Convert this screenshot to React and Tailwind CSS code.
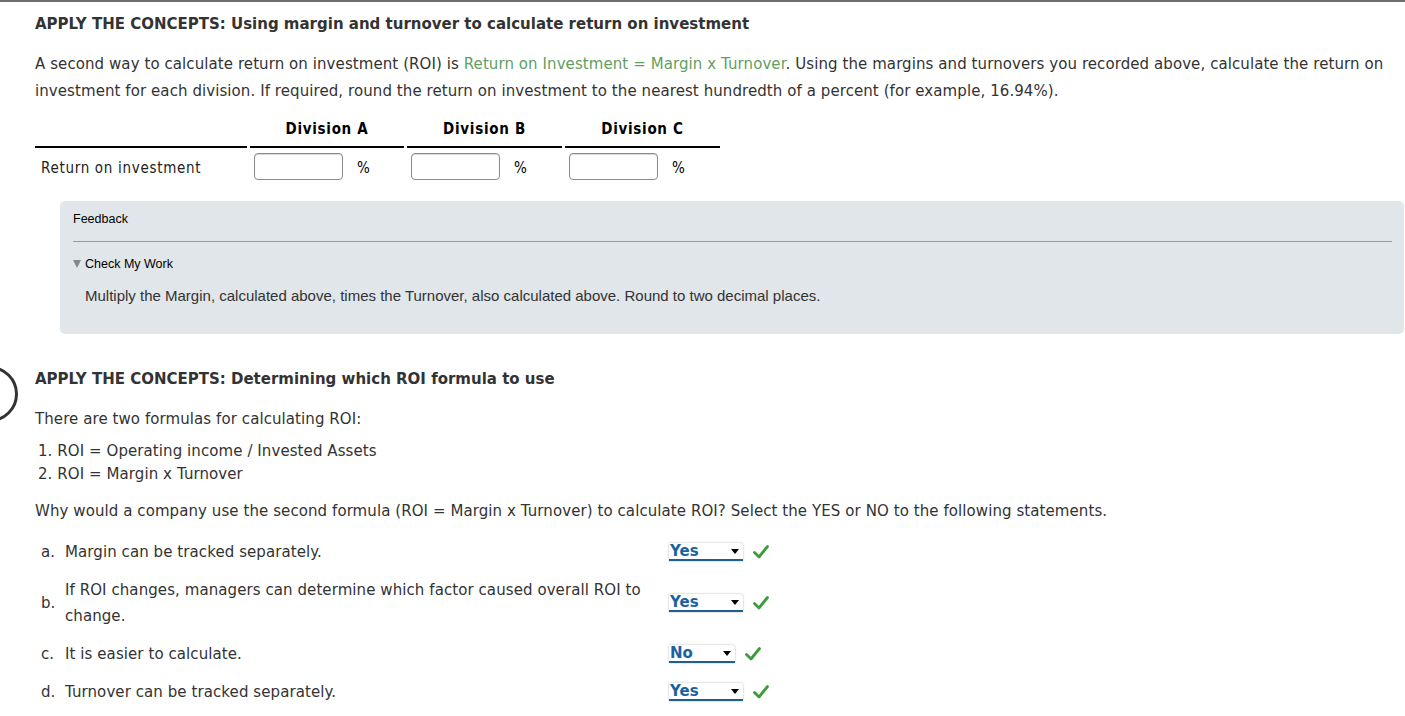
import React from "react";

const V = "font-['Verdana','DejaVu_Sans',sans-serif]";
const T = "font-['Tahoma','DejaVu_Sans_Condensed','DejaVu_Sans',sans-serif]";
const A = "font-['Arial','Liberation_Sans',sans-serif]";

function Select({ value, w }) {
  return (
    <div
      className={`relative h-[18px] bg-white border-b-2 border-[#1f5f8c] shadow-[0_0_2px_rgba(0,0,0,0.35)] rounded-tr-[3px] flex items-center ${w}`}
    >
      <span className={`${V} text-[15px] font-bold text-[#1a62a0] leading-[16px] pl-[1px] tracking-normal`}>{value}</span>
      <span className="absolute right-[4px] top-[6px] w-0 h-0 border-l-[4px] border-r-[4px] border-t-[5px] border-l-transparent border-r-transparent border-t-black" />
    </div>
  );
}

function Check() {
  return (
    <svg width="16" height="16" viewBox="0 0 16 16" className="shrink-0">
      <path d="M1.5 8.5 L6 13 L14.5 2.5" fill="none" stroke="#3c9b3c" strokeWidth="2.8" strokeLinecap="round" strokeLinejoin="round" />
    </svg>
  );
}

function Row({ letter, children, value, selW }) {
  return (
    <div className="flex items-center">
      <div className="w-[30px] pl-[6px] shrink-0">{letter}</div>
      <div className="w-[604px] shrink-0 leading-[26px]">{children}</div>
      <div className="flex items-center gap-[10px]">
        <Select value={value} w={selW} />
        <Check />
      </div>
    </div>
  );
}

export default function App() {
  return (
    <div className={`${V} text-[15px] text-[#333] bg-white min-h-[716px] border-t-2 border-[#6f6f6f] relative overflow-hidden`}>
      <div className="pl-[35px] pr-[1px]">
        <h1 className="font-bold leading-[27px] pt-[9px]">
          APPLY THE CONCEPTS: Using margin and turnover to calculate return on investment
        </h1>
        <p className="leading-[27px] mt-[13px] tracking-[0.08px]">
          A second way to calculate return on investment (ROI) is{" "}
          <span className="text-[#5f9f5f]">Return on Investment = Margin x Turnover</span>. Using the margins and
          turnovers you recorded above, calculate the return on investment for each division. If required, round the
          return on investment to the nearest hundredth of a percent (for example, 16.94%).
        </p>

        {/* table */}
        <div className={`${T} text-[15px] text-black mt-[14px] tracking-[0.7px]`}>
          <div className="flex gap-[3px]">
            <div className="w-[212px] border-b-2 border-black" />
            {["Division A", "Division B", "Division C"].map((d, i) => (
              <div
                key={d}
                className={`${i === 0 ? "w-[154px]" : "w-[155px]"} border-b-2 border-black text-center font-bold leading-[20px] pb-[7px]`}
              >
                {d}
              </div>
            ))}
          </div>
          <div className="flex gap-[3px] pt-[5px] items-center">
            <div className="w-[212px] pl-[6px] pt-[3px] text-[#222]">Return on investment</div>
            {[0, 1, 2].map((i) => (
              <div key={i} className={`${i === 0 ? "w-[154px]" : "w-[155px]"} flex items-center pl-[4px]`}>
                <div className="w-[89px] h-[27px] border border-[#8a8a8a] rounded-[4px] bg-white shadow-[inset_0_1px_1px_rgba(0,0,0,0.15)]" />
                <span className="ml-[14px] pt-[3px]">%</span>
              </div>
            ))}
          </div>
        </div>

        {/* feedback */}
        <div className={`${A} ml-[25px] mt-[21px] bg-[#e0e6e9] rounded-[5px] pl-[13px] pr-[12px] pt-[10px] pb-[30px]`}>
          <div className="leading-[16px] text-black text-[12.5px]">Feedback</div>
          <div className="mt-[14px] border-t border-[#9a9a9a]" />
          <div className="mt-[14px] leading-[16px] text-black text-[12.5px] flex items-center">
            <span className="w-0 h-0 border-l-[4px] border-r-[4px] border-t-[8px] border-l-transparent border-r-transparent border-t-[#888] mr-[4px]" />
            Check My Work
          </div>
          <div className="mt-[16px] pl-[12px] leading-[16px] text-[15px] text-[#333]">
            Multiply the Margin, calculated above, times the Turnover, also calculated above. Round to two decimal places.
          </div>
        </div>

        {/* section 2 */}
        <div className="relative mt-[32px]">
          <div className="absolute left-[-73px] top-[0px] w-[56px] h-[56px] rounded-full border-[3px] border-[#333]" />
          <h2 className="font-bold leading-[27px]">APPLY THE CONCEPTS: Determining which ROI formula to use</h2>
        </div>
        <div className="tracking-[0.08px]">
          <p className="leading-[27px] mt-[13px]">There are two formulas for calculating ROI:</p>
          <div className="mt-[7px] leading-[23px] pl-[3px]">
            <div>1. ROI = Operating income / Invested Assets</div>
            <div>2. ROI = Margin x Turnover</div>
          </div>
          <p className="leading-[27px] mt-[12px]">
            Why would a company use the second formula (ROI = Margin x Turnover) to calculate ROI? Select the YES or NO
            to the following statements.
          </p>

          <div className="mt-[14px] flex flex-col gap-[12px]">
            <Row letter="a." value="Yes" selW="w-[74px]">
              Margin can be tracked separately.
            </Row>
            <Row letter="b." value="Yes" selW="w-[74px]">
              If ROI changes, managers can determine which factor caused overall ROI to change.
            </Row>
            <Row letter="c." value="No" selW="w-[66px]">
              It is easier to calculate.
            </Row>
            <Row letter="d." value="Yes" selW="w-[74px]">
              Turnover can be tracked separately.
            </Row>
          </div>
        </div>
      </div>
    </div>
  );
}
